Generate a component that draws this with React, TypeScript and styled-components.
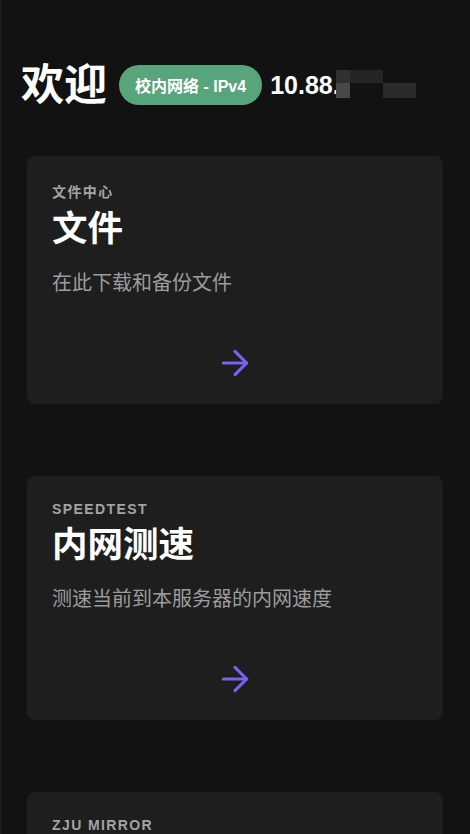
import React from "react";
import styled, { createGlobalStyle } from "styled-components";

const GlobalStyle = createGlobalStyle`
  html, body {
    margin: 0;
    padding: 0;
    background: #121212;
  }
  body {
    font-family: "Liberation Sans", "Noto Sans CJK SC", sans-serif;
    color: #ffffff;
  }
  * { box-sizing: border-box; }
`;

const Page = styled.div`
  min-height: 834px;
  background: #121212;
  border-left: 1px solid #1f1f1f;
  padding: 55px 27px 40px 26px;
`;

const Header = styled.header`
  display: flex;
  align-items: center;
  margin-left: -6px;
`;

const Title = styled.h1`
  margin: 0 12px 0 0;
  font-size: 43px;
  line-height: 60px;
  font-weight: 700;
  color: #ffffff;
`;

const Badge = styled.span`
  display: inline-flex;
  align-items: center;
  height: 40px;
  padding: 0 16px 0 16px;
  border-radius: 20px;
  background: #58a57b;
  color: #ffffff;
  font-size: 16px;
  font-weight: 700;
  white-space: nowrap;
`;

const IpWrap = styled.span`
  position: relative;
  margin-left: 8px;
  font-size: 25px;
  line-height: 28px;
  font-weight: 700;
  color: #ffffff;
  white-space: nowrap;
`;

const Mosaic = styled.span`
  position: absolute;
  left: 66px;
  top: -1px;
  display: grid;
  grid-template-columns: 14px 33px 33px;
  grid-template-rows: 13px 15px;
  background: #121212;
`;

const Tile = styled.span<{ $c: string }>`
  background: ${(p) => p.$c};
`;

const CardList = styled.div`
  display: flex;
  flex-direction: column;
  gap: 72px;
  margin-top: 41px;
`;

const Card = styled.a`
  display: flex;
  flex-direction: column;
  background: #1e1e1e;
  border-radius: 8px;
  padding: 25px 25px 21px;
  text-decoration: none;
`;

const Label = styled.div`
  font-size: 14px;
  font-weight: 700;
  letter-spacing: 0.1em;
  color: #a3a3a3;
`;

const CardTitle = styled.h2`
  margin: 6px 0 0;
  font-size: 35.5px;
  line-height: 44px;
  font-weight: 700;
  color: #ffffff;
`;

const Desc = styled.p`
  margin: 19px 0 0;
  font-size: 20px;
  line-height: 26px;
  font-weight: 400;
  color: #9c9c9c;
`;

const ArrowBox = styled.div`
  display: flex;
  justify-content: center;
  align-items: center;
  height: 40px;
  margin-top: 47px;
  color: #7564f2;
`;

const Arrow = () => (
  <svg width="40" height="40" viewBox="0 0 24 24" fill="none" stroke="currentColor" strokeWidth="1.9" strokeLinecap="round" strokeLinejoin="round">
    <path d="M5 12h14" />
    <path d="m12 5 7 7-7 7" />
  </svg>
);

const cards = [
  { label: "文件中心", title: "文件", desc: "在此下载和备份文件" },
  { label: "SPEEDTEST", title: "内网测速", desc: "测速当前到本服务器的内网速度" },
  { label: "ZJU MIRROR", title: "镜像站", desc: "浙江大学开源软件镜像站" },
];

export default function App() {
  return (
    <>
      <GlobalStyle />
      <Page>
        <Header>
          <Title>欢迎</Title>
          <Badge>校内网络 - IPv4</Badge>
          <IpWrap>
            10.88.1
            <Mosaic>
              <Tile $c="#303030" />
              <Tile $c="#252525" />
              <Tile $c="#121212" />
              <Tile $c="#484848" />
              <Tile $c="#121212" />
              <Tile $c="#2b2b2b" />
            </Mosaic>
          </IpWrap>
        </Header>
        <CardList>
          {cards.map((c) => (
            <Card key={c.label} href="#">
              <Label>{c.label}</Label>
              <CardTitle>{c.title}</CardTitle>
              <Desc>{c.desc}</Desc>
              <ArrowBox>
                <Arrow />
              </ArrowBox>
            </Card>
          ))}
        </CardList>
      </Page>
    </>
  );
}
